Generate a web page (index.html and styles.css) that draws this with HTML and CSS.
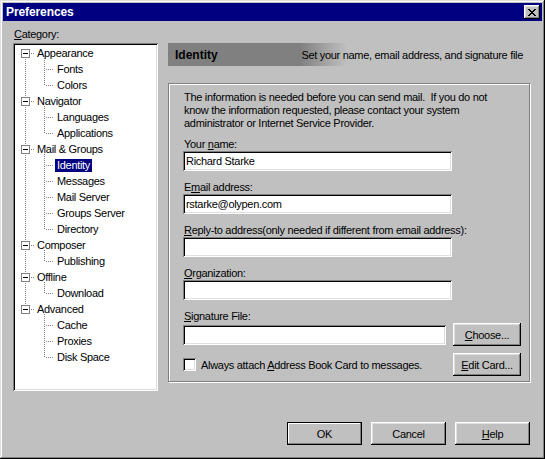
FILE: index.html
```html
<!DOCTYPE html>
<html lang="en">
<head>
  <meta charset="UTF-8" />
  <title>Preferences</title>
  <link rel="stylesheet" href="styles.css">
</head>
<body>
  <div class="window">
    <div class="titlebar">
      <span class="title">Preferences</span>
      <button class="close-btn" title="Close">
        <svg width="8" height="7" viewBox="0 0 8 7" shape-rendering="crispEdges">
          <path fill="#000" d="M0 0h2v1h-2z M6 0h2v1h-2z M1 1h2v1h-2z M5 1h2v1h-2z M2 2h4v1h-4z M3 3h2v1h-2z M2 4h4v1h-4z M1 5h2v1h-2z M5 5h2v1h-2z M0 6h2v1h-2z M6 6h2v1h-2z"/>
        </svg>
      </button>
    </div>

    <div class="content">
      <div class="category-label"><u>C</u>ategory:</div>

      <ul class="tree">
        <li class="group">
          <div class="row"><span class="toggle"></span><span class="label">Appearance</span></div>
          <ul class="children">
            <li><span class="label">Fonts</span></li>
            <li><span class="label">Colors</span></li>
          </ul>
        </li>
        <li class="group">
          <div class="row"><span class="toggle"></span><span class="label">Navigator</span></div>
          <ul class="children">
            <li><span class="label">Languages</span></li>
            <li><span class="label">Applications</span></li>
          </ul>
        </li>
        <li class="group">
          <div class="row"><span class="toggle"></span><span class="label">Mail &amp; Groups</span></div>
          <ul class="children">
            <li><span class="label selected">Identity</span></li>
            <li><span class="label">Messages</span></li>
            <li><span class="label">Mail Server</span></li>
            <li><span class="label">Groups Server</span></li>
            <li><span class="label">Directory</span></li>
          </ul>
        </li>
        <li class="group">
          <div class="row"><span class="toggle"></span><span class="label">Composer</span></div>
          <ul class="children">
            <li><span class="label">Publishing</span></li>
          </ul>
        </li>
        <li class="group">
          <div class="row"><span class="toggle"></span><span class="label">Offline</span></div>
          <ul class="children">
            <li><span class="label">Download</span></li>
          </ul>
        </li>
        <li class="group">
          <div class="row"><span class="toggle"></span><span class="label">Advanced</span></div>
          <ul class="children">
            <li><span class="label">Cache</span></li>
            <li><span class="label">Proxies</span></li>
            <li><span class="label">Disk Space</span></li>
          </ul>
        </li>
      </ul>

      <div class="panel">
        <div class="panel-header">
          <span class="panel-title">Identity</span>
          <span class="panel-desc">Set your name, email address, and signature file</span>
        </div>

        <div class="groupbox">
          <p class="intro">The information is needed before you can send mail.&nbsp; If you do not<br>know the information requested, please contact your system<br>administrator or Internet Service Provider.</p>

          <div class="field">
            <label>Your <u>n</u>ame:</label>
            <input class="textbox" type="text" value="Richard Starke">
          </div>
          <div class="field">
            <label>E<u>m</u>ail address:</label>
            <input class="textbox" type="text" value="rstarke@olypen.com">
          </div>
          <div class="field">
            <label><u>R</u>eply-to address(only needed if different from email address):</label>
            <input class="textbox" type="text" value="">
          </div>
          <div class="field">
            <label><u>O</u>rganization:</label>
            <input class="textbox" type="text" value="">
          </div>
          <div class="field">
            <label><u>S</u>ignature File:</label>
            <div class="sig-row">
              <input class="textbox sig" type="text" value="">
              <button class="btn btn-small"><u>C</u>hoose...</button>
            </div>
          </div>
          <div class="check-row">
            <span class="checkbox"></span>
            <span class="check-label">Always attach <u>A</u>ddress Book Card to messages.</span>
            <button class="btn btn-small btn-right"><u>E</u>dit Card...</button>
          </div>
        </div>
      </div>
    </div>

    <div class="footer">
      <button class="btn btn-default">OK</button>
      <button class="btn">Cancel</button>
      <button class="btn"><u>H</u>elp</button>
    </div>
  </div>
</body>
</html>
```

FILE: styles.css
```css
* {
  box-sizing: border-box;
}

body {
  margin: 0;
  background: #c0c0c0;
  font-family: "Liberation Sans", Arial, sans-serif;
  font-size: 11px;
  letter-spacing: -0.3px;
  color: #000;
}

.window {
  width: 545px;
  height: 459px;
  padding: 3px;
  background: #c0c0c0;
  box-shadow: inset -1px -1px #000, inset 1px 1px #dfdfdf, inset -2px -2px #808080, inset 2px 2px #fff;
  display: flex;
  flex-direction: column;
}

.titlebar {
  height: 18px;
  background: #000080;
  color: #fff;
  display: flex;
  align-items: center;
  justify-content: space-between;
  padding: 0 2px 0 3px;
}

.title {
  font-weight: bold;
  font-size: 12px;
  letter-spacing: -0.1px;
}

.close-btn {
  width: 16px;
  height: 14px;
  padding: 0;
  border: none;
  background: #c0c0c0;
  box-shadow: inset -1px -1px #000, inset 1px 1px #fff, inset -2px -2px #808080, inset 2px 2px #dfdfdf;
  display: flex;
  align-items: center;
  justify-content: center;
}

.content {
  display: grid;
  grid-template-columns: 145px 363px;
  grid-template-rows: 15px 348px;
  column-gap: 10px;
  padding: 7px 0 0 10px;
}

.category-label {
  grid-column: 1;
  grid-row: 1;
  line-height: 13px;
  padding-left: 1px;
}

/* tree */
.tree {
  grid-column: 1;
  grid-row: 2;
  list-style: none;
  margin: 0;
  padding: 2px;
  background: #fff;
  box-shadow: inset 1px 1px #808080, inset -1px -1px #fff, inset 2px 2px #000, inset -2px -2px #dfdfdf;
}

.tree ul {
  list-style: none;
  margin: 0;
  padding: 0;
}

.group {
  position: relative;
}

.group:not(:last-child)::before {
  content: "";
  position: absolute;
  left: 10px;
  top: 8px;
  bottom: -8px;
  width: 1px;
  background: repeating-linear-gradient(to bottom, #808080 0 1px, transparent 1px 2px);
}

.row {
  height: 16px;
  display: flex;
  align-items: center;
  padding-left: 6px;
}

.toggle {
  position: relative;
  width: 9px;
  height: 9px;
  border: 1px solid #808080;
  background: #fff;
  margin-right: 5px;
}

.toggle::after {
  content: "";
  position: absolute;
  left: 1px;
  top: 3px;
  width: 5px;
  height: 1px;
  background: #000;
}

.toggle::before {
  content: "";
  position: absolute;
  left: 8px;
  top: 3px;
  width: 5px;
  height: 1px;
  background: repeating-linear-gradient(to right, transparent 0 1px, #808080 1px 2px);
}

.label {
  display: inline-block;
  line-height: 13px;
  padding: 0 2px;
  white-space: nowrap;
}

.label.selected {
  background: #000080;
  color: #fff;
}

.children {
  position: relative;
}

.children::before {
  content: "";
  position: absolute;
  left: 29px;
  top: -3px;
  bottom: 8px;
  width: 1px;
  background: repeating-linear-gradient(to bottom, #808080 0 1px, transparent 1px 2px);
}

.children li {
  position: relative;
  height: 16px;
  display: flex;
  align-items: center;
  padding-left: 40px;
}

.children li::before {
  content: "";
  position: absolute;
  left: 30px;
  top: 8px;
  width: 9px;
  height: 1px;
  background: repeating-linear-gradient(to right, transparent 0 1px, #808080 1px 2px);
}

/* right panel */
.panel {
  grid-column: 2;
  grid-row: 2;
}

.panel-header {
  height: 23px;
  display: flex;
  align-items: center;
  justify-content: space-between;
  padding: 0 8px 0 7px;
  background: linear-gradient(to right, #808080 132px, #c0c0c0 179px);
}

.panel-title {
  font-weight: bold;
  font-size: 12px;
  letter-spacing: 0;
}

.groupbox {
  margin-top: 17px;
  width: 362px;
  height: 299px;
  border: 1px solid #808080;
  box-shadow: inset 1px 1px #fff, 1px 1px #fff;
  padding: 7px 8px 0 14px;
}

.intro {
  margin: 0;
  line-height: 13px;
  padding-left: 1px;
}

.field {
  margin-top: 8px;
}

.field + .field {
  margin-top: 10px;
}

.field label {
  display: block;
  line-height: 13px;
  padding-left: 1px;
}

.textbox {
  display: block;
  width: 269px;
  height: 20px;
  margin: 0;
  padding: 0 3px;
  border: none;
  outline: none;
  background: #fff;
  font-family: inherit;
  font-size: 11px;
  letter-spacing: -0.3px;
  color: #000;
  box-shadow: inset 1px 1px #808080, inset -1px -1px #fff, inset 2px 2px #000, inset -2px -2px #dfdfdf;
}

.sig-row {
  display: flex;
  align-items: center;
  gap: 7px;
}

.textbox.sig {
  width: 263px;
}

.check-row {
  display: flex;
  align-items: center;
  margin-top: 7px;
}

.checkbox {
  width: 13px;
  height: 13px;
  background: #fff;
  margin-right: 5px;
  box-shadow: inset 1px 1px #808080, inset -1px -1px #fff, inset 2px 2px #000, inset -2px -2px #dfdfdf;
}

.btn-right {
  margin-left: auto;
}

/* buttons */
.btn {
  width: 75px;
  height: 23px;
  padding: 0;
  border: none;
  background: #c0c0c0;
  font-family: inherit;
  font-size: 11px;
  letter-spacing: -0.3px;
  color: #000;
  box-shadow: inset -1px -1px #000, inset 1px 1px #fff, inset -2px -2px #808080, inset 2px 2px #dfdfdf;
}

.btn-small {
  width: 68px;
}

.btn-default {
  border: 1px solid #000;
  box-shadow: inset -1px -1px #808080, inset 1px 1px #fff;
}

.footer {
  display: flex;
  justify-content: flex-end;
  gap: 9px;
  margin-top: 31px;
  padding-right: 12px;
}
```
